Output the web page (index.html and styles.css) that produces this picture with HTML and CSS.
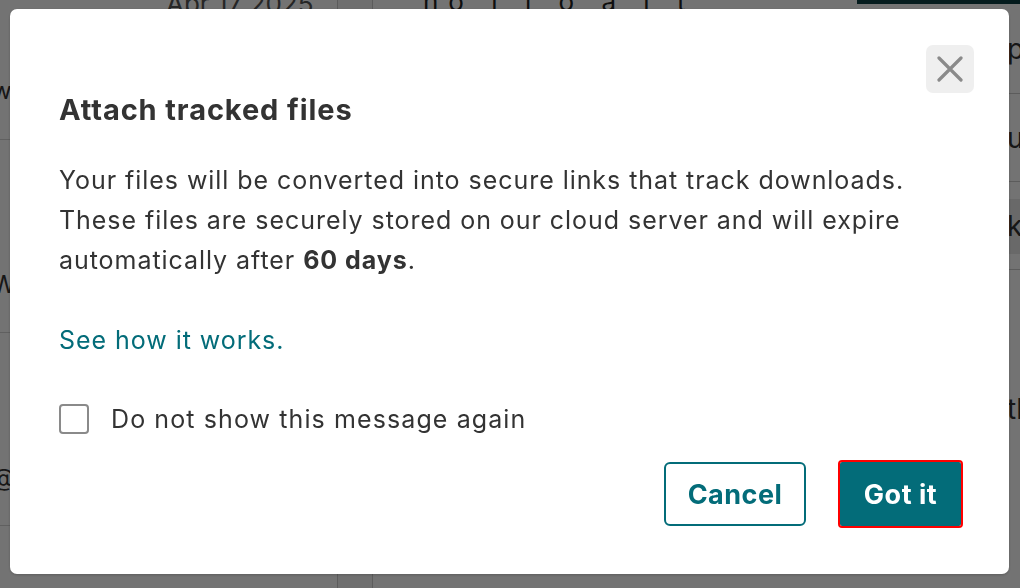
FILE: index.html
```html
<!DOCTYPE html>
<html lang="en">
<head>
  <meta charset="UTF-8">
  <title>Attach tracked files</title>
  <link rel="stylesheet" href="styles.css">
</head>
<body>

<div class="page">
  <div class="list">
    <div class="list-row first"><span class="date">Apr 17 2025</span><span class="frag">w</span></div>
    <div class="list-row"><span class="frag">W</span></div>
    <div class="list-row"><span class="frag">@</span></div>
    <div class="list-row"></div>
  </div>
  <div class="gutter"></div>
  <div class="main">
    <div class="main-title">ho l i o a l t</div>
  </div>
  <div class="side">
    <div class="side-top"></div>
    <div class="side-row"><span>po</span></div>
    <div class="side-row"><span>up</span></div>
    <div class="side-gap"></div>
    <div class="side-row shaded"><span>k</span></div>
    <div class="side-rest"><span>th</span></div>
  </div>
</div>

<div class="backdrop">
  <div class="modal" role="dialog">
    <button class="close" aria-label="Close">
      <svg width="26" height="26" viewBox="0 0 26 26">
        <path d="M2 2 L24 24 M24 2 L2 24" stroke="#8a8a8a" stroke-width="3.2" stroke-linecap="round"/>
      </svg>
    </button>

    <h2>Attach tracked files</h2>
    <p class="text">Your files will be converted into secure links that track downloads.<br>
      These files are securely stored on our cloud server and will expire<br>
      automatically after <b>60 days</b>.</p>

    <a class="link" href="#">See how it works.</a>

    <label class="check">
      <span class="box"></span>
      <span>Do not show this message again</span>
    </label>

    <div class="actions">
      <button class="btn btn-outline">Cancel</button>
      <button class="btn btn-primary">Got it</button>
    </div>
  </div>
</div>

</body>
</html>
```

FILE: styles.css
```css
* {
  margin: 0;
  padding: 0;
  box-sizing: border-box;
}

body {
  font-family: 'Inter', 'Noto Sans', sans-serif;
  width: 1020px;
  height: 588px;
  overflow: hidden;
  background: #fff;
  color: #333;
}

/* page behind the dialog */
.page {
  display: flex;
  height: 588px;
  overflow: hidden;
}

.list {
  width: 338px;
  display: flex;
  flex-direction: column;
  border-right: 1px solid #ccc;
  overflow: hidden;
}

.list-row {
  flex-shrink: 0;
  height: 193px;
  border-bottom: 1px solid #d6d6d6;
  position: relative;
  font-size: 24px;
}

.list-row.first {
  height: 140px;
}

.list-row .date {
  position: absolute;
  top: -12px;
  left: 166px;
  color: #555;
  font-size: 26px;
}

.list-row .frag {
  position: absolute;
  left: -8px;
  top: 130px;
}

.list-row.first .frag {
  top: 76px;
}

.gutter {
  width: 35px;
  border-right: 1px solid #ccc;
  background: #f7f7f7;
}

.main {
  flex: 1;
  padding-left: 50px;
}

.main-title {
  margin-top: -14px;
  font-size: 26px;
  letter-spacing: 10px;
  color: #222;
}

.side {
  width: 163px;
  display: flex;
  flex-direction: column;
  background: #fff;
  overflow: hidden;
}

.side-top {
  height: 4px;
  background: #093d42;
}

.side-row {
  flex-shrink: 0;
  height: 90px;
  border-bottom: 1px solid #ccc;
  padding-left: 150px;
  font-size: 28px;
  display: flex;
  align-items: center;
  white-space: nowrap;
}

.side-row + .side-row {
  height: 88px;
}

.side-gap {
  height: 17px;
  flex-shrink: 0;
}

.side-row.shaded {
  height: 71px;
  background: #e8e8e8;
  align-items: flex-start;
  padding-top: 10px;
  box-shadow: inset 0 -15px 0 #fff;
}

.side-rest {
  flex: 1;
  padding: 122px 0 0 150px;
  font-size: 28px;
  white-space: nowrap;
}

/* dialog */
.backdrop {
  position: fixed;
  inset: 0;
  background: rgba(0, 0, 0, 0.55);
}

.modal {
  position: absolute;
  left: 10px;
  top: 9px;
  width: 999px;
  height: 565px;
  background: #fff;
  border-radius: 7px;
  padding: 85px 48px 48px 49px;
  display: flex;
  flex-direction: column;
  box-shadow: 0 1px 3px rgba(0, 0, 0, 0.2);
}

.close {
  position: absolute;
  top: 36px;
  right: 35px;
  width: 48px;
  height: 48px;
  border: none;
  border-radius: 7px;
  background: #efefef;
  display: flex;
  align-items: center;
  justify-content: center;
  cursor: pointer;
}

h2 {
  font-size: 29px;
  line-height: 32px;
  font-weight: 700;
  letter-spacing: 0.9px;
  color: #333;
}

.text {
  margin-top: 34px;
  font-size: 25px;
  line-height: 40px;
  letter-spacing: 0.95px;
  color: #333;
}

.text b {
  font-weight: 700;
}

.link {
  margin-top: 40px;
  font-size: 25px;
  line-height: 40px;
  letter-spacing: 0.95px;
  color: #036c79;
  text-decoration: none;
  align-self: flex-start;
}

.check {
  margin-top: 39px;
  display: flex;
  align-items: center;
  gap: 22px;
  font-size: 25px;
  line-height: 40px;
  letter-spacing: 1.1px;
  color: #333;
}

.box {
  width: 30px;
  height: 30px;
  border: 2px solid #8a8a8a;
  border-radius: 4px;
}

.actions {
  margin-top: auto;
  display: flex;
  justify-content: flex-end;
  gap: 34px;
}

.btn {
  font-family: inherit;
  font-size: 27px;
  font-weight: 700;
  letter-spacing: 0.5px;
  height: 64px;
  border-radius: 6px;
  cursor: pointer;
}

.btn-outline {
  width: 142px;
  background: #fff;
  color: #036c79;
  border: 2px solid #036c79;
}

.btn-primary {
  width: 121px;
  background: #036c79;
  color: #fff;
  border: none;
  border-radius: 2px;
  outline: 2px solid #ff0000;
}
```
